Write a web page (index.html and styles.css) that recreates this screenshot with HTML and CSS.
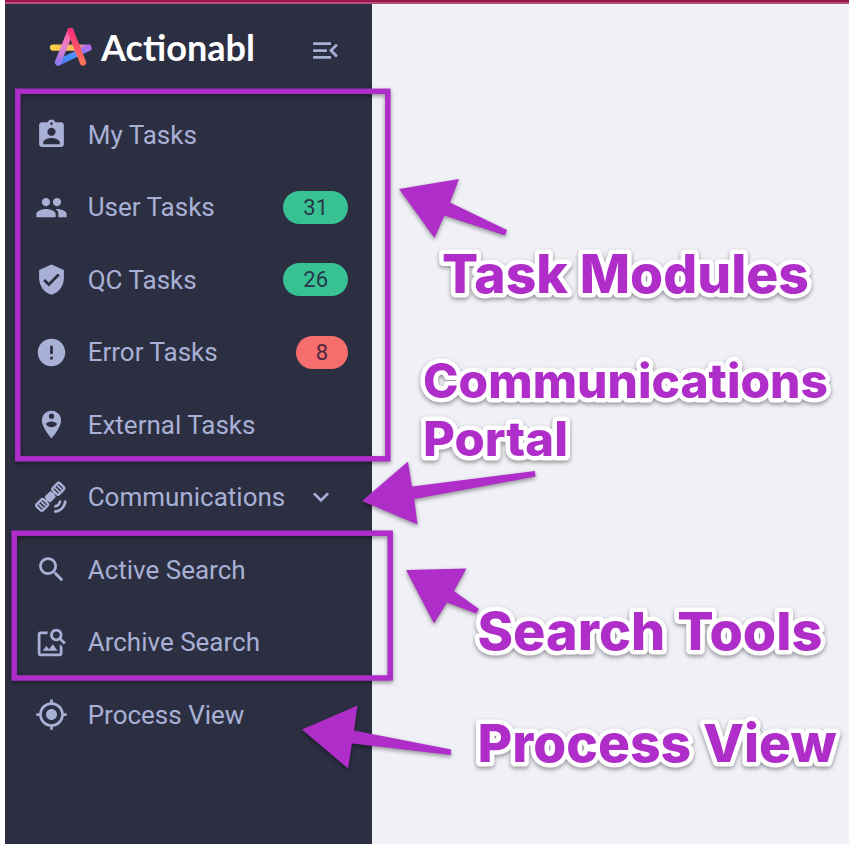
FILE: index.html
```
<!DOCTYPE html>
<html lang="en">
<head>
<meta charset="utf-8">
<title>Actionabl</title>
<link rel="stylesheet" href="styles.css">
</head>
<body>
<div class="app">
  <div class="topbar"></div>
  <div class="body">
    <aside class="sidebar">
      <header class="brand">
        <svg class="mark" viewBox="0 0 44 42">
          <defs>
            <linearGradient id="pink" x1="0" y1="0" x2="0" y2="1"><stop offset="0" stop-color="#ff5c96"/><stop offset=".5" stop-color="#e982cb"/><stop offset="1" stop-color="#9377f0"/></linearGradient>
            <linearGradient id="red" x1="0" y1="0" x2="0" y2="1"><stop offset="0" stop-color="#fa2f78"/><stop offset="1" stop-color="#ff7059"/></linearGradient>
            <linearGradient id="blue" x1="0" y1="1" x2="1" y2="0"><stop offset="0" stop-color="#5a78f5"/><stop offset=".4" stop-color="#3f92fa"/><stop offset="1" stop-color="#b36cf0"/></linearGradient>
            <linearGradient id="gold" gradientUnits="userSpaceOnUse" x1="4" y1="0" x2="38" y2="0"><stop offset="0" stop-color="#fbd146"/><stop offset=".65" stop-color="#f5b75b"/><stop offset="1" stop-color="#b36cf0"/></linearGradient>
          </defs>
          <g fill="none" stroke-width="6.2" stroke-linecap="round">
            <path d="M4 20.6H38.5V20.7" stroke="url(#gold)"/>
            <path d="M9.500 35.500L39.500 21" stroke="url(#blue)"/>
            <path d="M21.500 4L9 35.500" stroke="url(#pink)"/>
            <path d="M21.500 4L34 35.500" stroke="url(#red)"/>
          </g>
        </svg>
        <svg class="wordmark" viewBox="0 0 162 56"><text x="1" y="40" textLength="154" lengthAdjust="spacingAndGlyphs">Actionabl</text></svg>
        <svg class="icon toggle" viewBox="0 0 24 24"><path d="M3 18h13v-2H3v2zm0-5h10v-2H3v2zm0-7v2h13V6H3zm18 9.590L17.420 12 21 8.410 19.590 7l-5 5 5 5L21 15.590z"/></svg>
      </header>
      <nav class="nav">
        <a class="item"><svg class="icon" viewBox="0 0 24 24"><path d="M19 3h-4.180C14.400 1.840 13.300 1 12 1c-1.300 0-2.400.84-2.820 2H5c-1.100 0-2 .9-2 2v14c0 1.100.9 2 2 2h14c1.100 0 2-.9 2-2V5c0-1.100-.9-2-2-2zm-7 0c.55 0 1 .45 1 1s-.45 1-1 1-1-.45-1-1 .45-1 1-1zm0 4c1.660 0 3 1.340 3 3s-1.340 3-3 3-3-1.340-3-3 1.340-3 3-3zm6 12H6v-1.400c0-2 4-3.100 6-3.100s6 1.100 6 3.100V19z"/></svg><span class="label">My Tasks</span></a>
        <a class="item"><svg class="icon" viewBox="0 0 24 24"><path d="M16 11c1.660 0 2.990-1.340 2.990-3S17.660 5 16 5c-1.660 0-3 1.340-3 3s1.340 3 3 3zm-8 0c1.660 0 2.990-1.340 2.990-3S9.660 5 8 5C6.340 5 5 6.340 5 8s1.340 3 3 3zm0 2c-2.330 0-7 1.170-7 3.500V19h14v-2.500c0-2.330-4.670-3.500-7-3.500zm8 0c-.29 0-.62.02-.97.05 1.160.84 1.970 1.970 1.970 3.450V19h6v-2.500c0-2.330-4.670-3.500-7-3.500z"/></svg><span class="label">User Tasks</span><span class="badge">31</span></a>
        <a class="item"><svg class="icon" viewBox="0 0 24 24"><path d="M12 1L3 5v6c0 5.550 3.840 10.740 9 12 5.160-1.260 9-6.450 9-12V5l-9-4zm-2 16l-4-4 1.410-1.410L10 14.170l6.590-6.590L18 9l-8 8z"/></svg><span class="label">QC Tasks</span><span class="badge">26</span></a>
        <a class="item"><svg class="icon" viewBox="0 0 24 24"><path d="M12 2C6.480 2 2 6.480 2 12s4.480 10 10 10 10-4.480 10-10S17.520 2 12 2zm1 15h-2v-2h2v2zm0-4h-2V7h2v6z"/></svg><span class="label">Error Tasks</span><span class="badge error">8</span></a>
        <a class="item"><svg class="icon" viewBox="0 0 24 24"><path d="M12 2C8.140 2 5 5.140 5 9c0 5.250 7 13 7 13s7-7.750 7-13c0-3.860-3.140-7-7-7zm0 2c1.100 0 2 .9 2 2s-.9 2-2 2-2-.9-2-2 .9-2 2-2zm0 10c-1.670 0-3.140-.85-4-2.150.02-1.320 2.670-2.050 4-2.050s3.980.73 4 2.050C15.140 13.150 13.670 14 12 14z"/></svg><span class="label">External Tasks</span></a>
        <a class="item"><svg class="icon" viewBox="0 0 24 24">
          <g transform="rotate(-45 11.300 11.300)">
            <rect x="7.700" y="8.300" width="6.600" height="6" rx="1.300"/>
            <path d="M6 11.300h10" stroke="currentColor" stroke-width="1.600"/>
            <g fill="none" stroke="currentColor" stroke-width="1.700">
              <rect x="-.9" y="8.100" width="7.200" height="6.400" rx="1.300"/><path d="M1.500 9v4.600M3.900 9v4.600" stroke-width="1.300"/>
              <rect x="15.700" y="8.100" width="7.200" height="6.400" rx="1.300"/><path d="M18.100 9v4.600M20.500 9v4.600" stroke-width="1.300"/>
            </g>
          </g>
          <path d="M14 18.500A4.300 4.300 0 0 0 18.300 14.200M14 22.200A8 8 0 0 0 22 14.200" fill="none" stroke="currentColor" stroke-width="1.900"/>
        </svg><span class="label">Communications</span><svg class="chevron" viewBox="0 0 24 24"><path d="M16.590 8.590L12 13.170 7.410 8.590 6 10l6 6 6-6z"/></svg></a>
        <a class="item"><svg class="icon" viewBox="0 0 24 24"><path d="M15.500 14h-.79l-.28-.27C15.410 12.590 16 11.110 16 9.500 16 5.910 13.090 3 9.500 3S3 5.910 3 9.500 5.910 16 9.500 16c1.610 0 3.090-.59 4.230-1.570l.27.28v.79l5 4.990L20.490 19l-4.990-5zm-6 0C7.010 14 5 11.990 5 9.500S7.010 5 9.500 5 14 7.010 14 9.500 11.990 14 9.500 14z"/></svg><span class="label">Active Search</span></a>
        <a class="item"><svg class="icon" viewBox="0 0 24 24"><path d="M18 13v7H4V6h5.020c.05-.71.22-1.380.48-2H4c-1.100 0-2 .9-2 2v14c0 1.100.9 2 2 2h14c1.100 0 2-.9 2-2v-5l-2-2zm-1.500 5h-11l2.750-3.530 1.960 2.360 2.750-3.540L16.500 18zm2.800-9.110c.44-.7.7-1.510.7-2.390C20 4.010 17.990 2 15.500 2S11 4.010 11 6.500s2.010 4.500 4.490 4.500c.88 0 1.700-.26 2.390-.7L21 13.420 22.420 12 19.300 8.890zM15.500 9C14.120 9 13 7.880 13 6.500S14.120 4 15.500 4 18 5.120 18 6.500 16.880 9 15.500 9z"/></svg><span class="label">Archive Search</span></a>
        <a class="item"><svg class="icon" viewBox="0 0 24 24"><path d="M12 8c-2.210 0-4 1.790-4 4s1.790 4 4 4 4-1.790 4-4-1.790-4-4-4zm8.940 3c-.46-4.170-3.770-7.480-7.940-7.940V1h-2v2.060C6.830 3.520 3.520 6.830 3.060 11H1v2h2.060c.46 4.170 3.770 7.480 7.940 7.940V23h2v-2.060c4.170-.46 7.480-3.770 7.940-7.940H23v-2h-2.060zM12 19c-3.870 0-7-3.130-7-7s3.130-7 7-7 7 3.130 7 7-3.130 7-7 7z"/></svg><span class="label">Process View</span></a>
      </nav>
    </aside>
    <main class="content"></main>
  </div>
</div>
<svg class="annotations" viewBox="0 0 862 844">
  <g class="frames">
    <rect x="17.800" y="91.300" width="370" height="367.500"/>
    <rect x="14.200" y="533.200" width="376" height="144.800"/>
  </g>
  <g class="arrows">
    <path d="M399 189L459 179L450 202.500L507 230L505 235.500L444.500 215.500L434.500 238Z"/>
    <path d="M362 501L408 461.500L412 486.500L535 471L535.500 476.500L414.300 499L417.500 524.500Z"/>
    <path d="M406 570L466.500 568.500L454 591L479 609L476 613.500L447 602.500L434 623.500Z"/>
    <path d="M302 729.500L357.500 705.500L354 730.500L451 749.500V755L352 743.500L348 768.500Z"/>
  </g>
  <g class="notes">
    <text x="442" y="293" font-size="53" textLength="367" lengthAdjust="spacingAndGlyphs">Task Modules</text>
    <text x="423" y="398" font-size="47.500" textLength="405" lengthAdjust="spacingAndGlyphs">Communications</text>
    <text x="423" y="456" font-size="47.500" textLength="145" lengthAdjust="spacingAndGlyphs">Portal</text>
    <text x="477.500" y="650" font-size="52.500" textLength="345" lengthAdjust="spacingAndGlyphs">Search Tools</text>
    <text x="477.500" y="762" font-size="52.500" textLength="359" lengthAdjust="spacingAndGlyphs">Process View</text>
  </g>
</svg>
</body>
</html>
```
FILE: styles.css
```
* { box-sizing: border-box; }
body {
  margin: 0;
  background: #fff;
  font-family: Roboto, "Liberation Sans", sans-serif;
}
.app {
  display: flex;
  flex-direction: column;
  width: 844px;
  height: 844px;
  margin-left: 5px;
}
.topbar {
  height: 4px;
  background: #9d1448;
  border-bottom: 2px solid #b0527b;
}
.body { display: flex; flex: 1; }
.sidebar {
  width: 367px;
  background: #2c2f42;
  color: #a9b0d6;
}
.content { flex: 1; background: #f0f1f7; }
.brand {
  display: flex;
  align-items: center;
  height: 94.400px;
  padding: 0 30.500px 2px 44px;
}
.mark { width: 44px; height: 42px; margin-top: -4px; }
.wordmark { width: 162px; height: 56px; margin: -3px 0 0 7px; }
.wordmark text {
  font: 700 35.500px Lato, sans-serif;
  fill: #fff;
}
.icon {
  flex: none;
  width: 33px;
  height: 33px;
  fill: currentColor;
}
.toggle { margin-left: auto; }
.item {
  display: flex;
  align-items: center;
  height: 72.5px;
  padding: 0 24px 0 29.500px;
}
.label {
  margin-left: 20.200px;
  font-size: 26px;
  line-height: 32px;
  white-space: nowrap;
}
.badge {
  margin-left: auto;
  padding: 0 20px;
  border-radius: 17px;
  background: #38c192;
  color: #26384a;
  font-size: 22px;
  line-height: 33px;
}
.badge.error { background: #f66d6e; color: #4b2740; }
.chevron {
  width: 32px;
  height: 32px;
  margin-left: 20px;
  fill: currentColor;
}
.annotations {
  position: absolute;
  top: 0;
  left: 0;
  width: 862px;
  height: 844px;
}
.frames, .arrows, .notes { filter: drop-shadow(0 2px 2px rgba(0, 0, 0, .4)); }
.frames { fill: none; stroke: #af2dc8; stroke-width: 5.500; }
.arrows { fill: #af2dc8; }
.notes {
  font-family: Inter, sans-serif;
  font-weight: 800;
  fill: #af2dc8;
  stroke: #fff;
  stroke-width: 9;
  stroke-linejoin: round;
  paint-order: stroke;
}
```
